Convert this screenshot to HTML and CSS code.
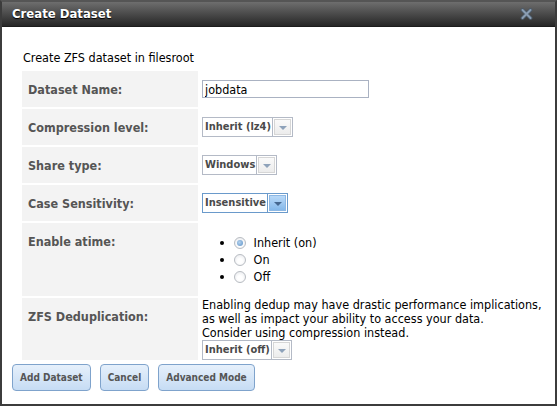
FILE: index.html
```html
<!DOCTYPE html>
<html>
<head>
  <meta charset="utf-8">
  <title>Create Dataset</title>
  <link rel="stylesheet" href="styles.css">
</head>
<body>
  <div class="dialog">
    <div class="titlebar">
      <span class="title">Create Dataset</span>
      <span class="close">
        <svg width="13" height="12" viewBox="0 0 13 12">
          <path d="M2.5 2 L10.5 10 M10.5 2 L2.5 10" stroke="#4b5a6a" stroke-width="3.8" stroke-linecap="round"/>
          <path d="M2.5 2 L10.5 10 M10.5 2 L2.5 10" stroke="#8a9db2" stroke-width="2" stroke-linecap="round"/>
        </svg>
      </span>
    </div>
    <div class="content">
      <p class="intro">Create ZFS dataset in filesroot</p>
      <table class="form">
        <tr>
          <th>Dataset Name:</th>
          <td><input type="text" class="text" value="jobdata"></td>
        </tr>
        <tr>
          <th>Compression level:</th>
          <td><span class="select"><span class="val">Inherit (lz4)</span><span class="arrow"></span></span></td>
        </tr>
        <tr>
          <th>Share type:</th>
          <td><span class="select"><span class="val">Windows</span><span class="arrow"></span></span></td>
        </tr>
        <tr>
          <th>Case Sensitivity:</th>
          <td><span class="select focused"><span class="val">Insensitive</span><span class="arrow"></span></span></td>
        </tr>
        <tr>
          <th>Enable atime:</th>
          <td>
            <ul class="radios">
              <li><label><input type="radio" name="atime" checked> Inherit (on)</label></li>
              <li><label><input type="radio" name="atime"> On</label></li>
              <li><label><input type="radio" name="atime"> Off</label></li>
            </ul>
          </td>
        </tr>
        <tr>
          <th>ZFS Deduplication:</th>
          <td>
            <div class="help">Enabling dedup may have drastic performance implications,<br>as well as impact your ability to access your data.<br>Consider using compression instead.</div>
            <span class="select"><span class="val">Inherit (off)</span><span class="arrow"></span></span>
          </td>
        </tr>
      </table>
    </div>
    <div class="actions">
      <button type="button">Add Dataset</button>
      <button type="button">Cancel</button>
      <button type="button">Advanced Mode</button>
    </div>
  </div>
</body>
</html>
```

FILE: styles.css
```css
html, body {
  margin: 0;
  padding: 0;
  background: #fff;
}
body {
  font-family: "DejaVu Sans Condensed", "DejaVu Sans", Verdana, sans-serif;
  font-stretch: condensed;
  font-size: 12.5px;
  color: #000;
}
.dialog {
  box-sizing: border-box;
  width: 557px;
  height: 406px;
  border: 2px solid #3c3c3c;
  border-top-color: #555;
  display: flex;
  flex-direction: column;
  overflow: hidden;
}
.titlebar {
  flex: none;
  height: 24px;
  background: linear-gradient(to bottom, #6e6e6e, #4a4a4a 50%, #262626);
  border-bottom: 1px solid #1c1c1c;
  display: flex;
  align-items: center;
  justify-content: space-between;
  padding: 0 22px 0 10px;
}
.title {
  color: #fff;
  font-weight: bold;
  font-size: 13px;
  text-shadow: 0 1px 1px #000;
  margin-top: -1px;
}
.close {
  display: flex;
}
.content {
  flex: 1;
  min-height: 0;
  padding: 24px 0 0 20px;
}
.intro {
  margin: 0 0 4px 1px;
  line-height: 14px;
}
.form {
  border-spacing: 2px;
  margin-left: -2px;
}
.form th {
  width: 170px;
  background: #f3f3f3;
  color: #555;
  text-align: left;
  vertical-align: top;
  font-weight: bold;
  padding: 12px 0 0 6px;
  line-height: 14px;
}
.form td {
  height: 36px;
  padding: 0 0 0 2px;
  vertical-align: middle;
  line-height: 14px;
}
.text {
  box-sizing: border-box;
  width: 167px;
  height: 18px;
  border: 1px solid #aab2c2;
  padding: 0 2px;
  margin: 0;
  font: inherit;
  color: #000;
}
.select {
  display: inline-flex;
  height: 20px;
  vertical-align: middle;
  font-size: 11px;
  font-weight: bold;
  color: #4a4a4a;
}
.select .val {
  border: 1px solid #b4bac6;
  border-right: none;
  padding: 0 1px 0 2px;
  line-height: 18px;
  background: #fff;
}
.select .arrow {
  box-sizing: border-box;
  width: 21px;
  border: 1px solid #b4bac6;
  background: #fff;
  position: relative;
}
.select .arrow::before {
  content: "";
  position: absolute;
  left: 1px;
  top: 1px;
  right: 1px;
  bottom: 1px;
  border: 1px solid #d6d6d6;
  background: linear-gradient(to bottom, #fafafa, #ececec);
}
.select .arrow::after {
  content: "";
  position: absolute;
  left: 6px;
  top: 8px;
  border-left: 4px solid transparent;
  border-right: 4px solid transparent;
  border-top: 4px solid #8ea2ba;
}
.select.focused .val,
.select.focused .arrow {
  border-color: #6a9acb;
}
.select.focused .arrow::before {
  border-color: #8db8e4;
  background: linear-gradient(to bottom, #b9d9f8, #84b8ea);
}
.select.focused .arrow::after {
  border-top-color: #45678f;
}
.radios {
  margin: 11px 0;
  padding: 0 0 0 33px;
  list-style: disc;
}
.radios li {
  height: 17px;
  line-height: 17px;
}
.radios label {
  display: inline-block;
}
.radios input {
  appearance: none;
  -webkit-appearance: none;
  width: 12px;
  height: 12px;
  margin: 0 4px 0 -1px;
  vertical-align: -2px;
  border: 1px solid #b8bcc2;
  border-radius: 50%;
  background: radial-gradient(circle at 50% 60%, #fff 30%, #e4e6ea);
  position: relative;
}
.radios input:checked::after {
  content: "";
  position: absolute;
  left: 2px;
  top: 2px;
  width: 6px;
  height: 6px;
  border-radius: 50%;
  background: radial-gradient(circle at 40% 40%, #b5d3ef, #5a8fc4);
}
.help {
  line-height: 14px;
}
.actions {
  flex: none;
  display: flex;
  gap: 9px;
  padding: 0 0 13px 10px;
}
.actions button {
  height: 27px;
  padding: 0 7px;
  border: 1px solid #7fa3cc;
  border-radius: 4px;
  background: linear-gradient(to bottom, #e6f0fb, #c6dcf4);
  color: #555;
  font-family: inherit;
  font-stretch: condensed;
  font-weight: bold;
  font-size: 10px;
}
```
